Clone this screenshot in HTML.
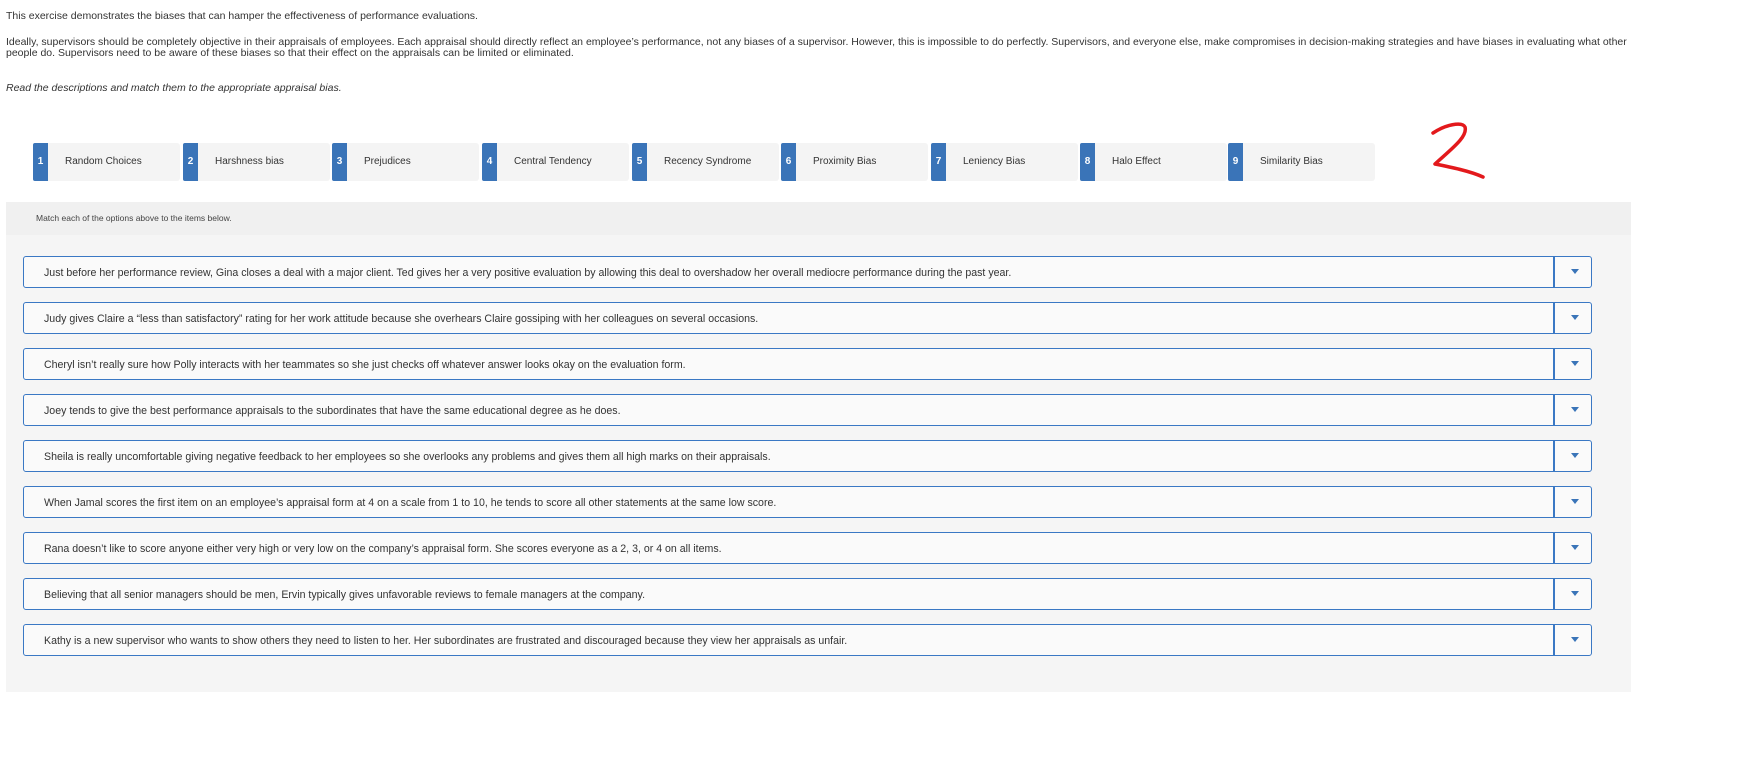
<!DOCTYPE html>
<html><head><meta charset="utf-8"><style>
*{margin:0;padding:0;box-sizing:border-box}
body{width:1748px;height:760px;background:#fff;font-family:"Liberation Sans",Arial,sans-serif;color:#333;position:relative;overflow:hidden}
.t{position:absolute;left:6px;font-size:10.5px;white-space:nowrap}
.tile{position:absolute;top:143px;height:38px;width:147px;background:#f4f4f4;border-radius:3px}
.tile b{position:absolute;left:0;top:0;width:15px;height:38px;background:#3a74b8;color:#fff;font-size:10px;text-align:center;line-height:38px;border-radius:2px 0 0 2px}
.tile span{position:absolute;left:32px;top:0;line-height:38px;font-size:10px;color:#333}
.box{position:absolute;left:6px;top:202px;width:1625px;height:490px;background:#f5f5f5}
.hdr{position:absolute;left:0;top:0;width:100%;height:33px;background:#f0f0f0;font-size:8.5px;line-height:33px;padding-left:30px;color:#444}
.row{position:absolute;left:17px;width:1569px;height:32px;background:#fafafa;border:1.5px solid #3a78c4;border-radius:3px}
.row span{position:absolute;left:20px;top:2px;line-height:29px;font-size:10.6px;color:#333;white-space:nowrap}
.row i{position:absolute;left:1529px;top:0;width:1.5px;height:100%;background:#3a78c4}
.row em{position:absolute;left:1547px;top:12px;width:0;height:0;border-left:4px solid transparent;border-right:4px solid transparent;border-top:5px solid #3a74b8}
</style></head><body>
<div class="t" style="top:10px">This exercise demonstrates the biases that can hamper the effectiveness of performance evaluations.</div>
<div class="t" style="top:36px">Ideally, supervisors should be completely objective in their appraisals of employees. Each appraisal should directly reflect an employee’s performance, not any biases of a supervisor. However, this is impossible to do perfectly. Supervisors, and everyone else, make compromises in decision-making strategies and have biases in evaluating what other</div>
<div class="t" style="top:47px">people do. Supervisors need to be aware of these biases so that their effect on the appraisals can be limited or eliminated.</div>
<div class="t" style="top:82px;font-style:italic">Read the descriptions and match them to the appropriate appraisal bias.</div>

<div class="tile" style="left:33px"><b>1</b><span>Random Choices</span></div>
<div class="tile" style="left:183px"><b>2</b><span>Harshness bias</span></div>
<div class="tile" style="left:332px"><b>3</b><span>Prejudices</span></div>
<div class="tile" style="left:482px"><b>4</b><span>Central Tendency</span></div>
<div class="tile" style="left:632px"><b>5</b><span>Recency Syndrome</span></div>
<div class="tile" style="left:781px"><b>6</b><span>Proximity Bias</span></div>
<div class="tile" style="left:931px"><b>7</b><span>Leniency Bias</span></div>
<div class="tile" style="left:1080px"><b>8</b><span>Halo Effect</span></div>
<div class="tile" style="left:1228px"><b>9</b><span>Similarity Bias</span></div>

<svg style="position:absolute;left:1420px;top:115px" width="80" height="80"><path d="M13 18 C25 10 42 6 45 12 C48 22 30 35 15 49 C30 52 50 56 63 62" fill="none" stroke="#e3191c" stroke-width="3.5" stroke-linecap="round" stroke-linejoin="round"/></svg>

<div class="box">
<div class="hdr">Match each of the options above to the items below.</div>
<div class="row" style="top:54px"><span>Just before her performance review, Gina closes a deal with a major client. Ted gives her a very positive evaluation by allowing this deal to overshadow her overall mediocre performance during the past year.</span><i></i><em></em></div>
<div class="row" style="top:100px"><span>Judy gives Claire a “less than satisfactory” rating for her work attitude because she overhears Claire gossiping with her colleagues on several occasions.</span><i></i><em></em></div>
<div class="row" style="top:146px"><span>Cheryl isn’t really sure how Polly interacts with her teammates so she just checks off whatever answer looks okay on the evaluation form.</span><i></i><em></em></div>
<div class="row" style="top:192px"><span>Joey tends to give the best performance appraisals to the subordinates that have the same educational degree as he does.</span><i></i><em></em></div>
<div class="row" style="top:238px"><span>Sheila is really uncomfortable giving negative feedback to her employees so she overlooks any problems and gives them all high marks on their appraisals.</span><i></i><em></em></div>
<div class="row" style="top:284px"><span>When Jamal scores the first item on an employee’s appraisal form at 4 on a scale from 1 to 10, he tends to score all other statements at the same low score.</span><i></i><em></em></div>
<div class="row" style="top:330px"><span>Rana doesn’t like to score anyone either very high or very low on the company’s appraisal form. She scores everyone as a 2, 3, or 4 on all items.</span><i></i><em></em></div>
<div class="row" style="top:376px"><span>Believing that all senior managers should be men, Ervin typically gives unfavorable reviews to female managers at the company.</span><i></i><em></em></div>
<div class="row" style="top:422px"><span>Kathy is a new supervisor who wants to show others they need to listen to her. Her subordinates are frustrated and discouraged because they view her appraisals as unfair.</span><i></i><em></em></div>
</div>
</body></html>
